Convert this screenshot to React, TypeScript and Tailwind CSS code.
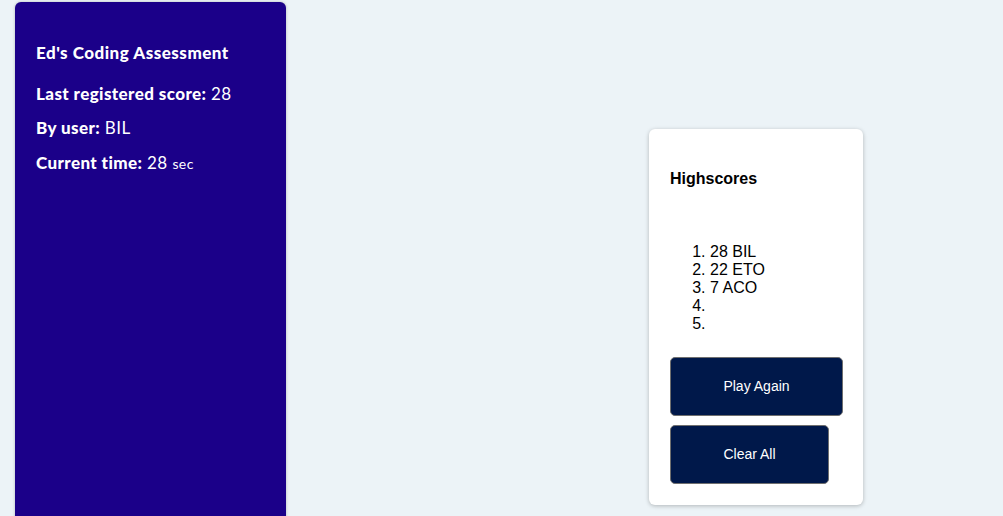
import React from "react";

export default function App() {
  const scores = ["28 BIL", "22 ETO", "7 ACO", "", ""];
  return (
    <div className="flex h-[516px] w-[1003px] overflow-hidden bg-[#ecf3f7]">
      <div
        className="ml-[15px] mt-[2px] h-[560px] w-[271px] shrink-0 rounded-t-[6px] bg-[#1b0089] pl-[21px] pt-[42px] text-white shadow-[0_0_3px_rgba(0,0,0,0.25)]"
        style={{ fontFamily: "Lato, 'Open Sans', sans-serif" }}
      >
        <div className="text-[17px] font-black leading-[18px] tracking-[0.5px]">Ed's Coding Assessment</div>
        <div className="mt-[23px] text-[17px] leading-[18px] tracking-[0.4px]">
          <span className="font-black">Last registered score:</span> 28
        </div>
        <div className="mt-[16px] text-[17px] leading-[18px] tracking-[0.4px]">
          <span className="font-black">By user:</span> BIL
        </div>
        <div className="mt-[17px] text-[17px] leading-[18px] tracking-[0.4px]">
          <span className="font-black">Current time:</span> 28 <span className="text-[14px]">sec</span>
        </div>
      </div>
      <div
        className="ml-[363px] mt-[129px] flex h-[376px] w-[214px] shrink-0 flex-col rounded-[6px] bg-white pl-[21px] pt-[41px] text-black shadow-[0_1px_4px_rgba(0,0,0,0.25)]"
        style={{ fontFamily: "'Liberation Sans', Arial, sans-serif" }}
      >
        <div className="text-[16px] font-bold leading-[18px]">Highscores</div>
        <ol className="mt-[55px] list-decimal pl-[40px] text-[16px] leading-[18px]">
          {scores.map((s, i) => (
            <li key={i} className="h-[18px]">{s}</li>
          ))}
        </ol>
        <button className="mt-[24px] h-[59px] w-[173px] rounded-[5px] border border-[#6f6f6f] bg-[#00184a] text-[14px] text-white">
          Play Again
        </button>
        <button className="mt-[9px] h-[59px] w-[159px] rounded-[5px] border border-[#6f6f6f] bg-[#00184a] text-[14px] text-white">
          Clear All
        </button>
      </div>
    </div>
  );
}
